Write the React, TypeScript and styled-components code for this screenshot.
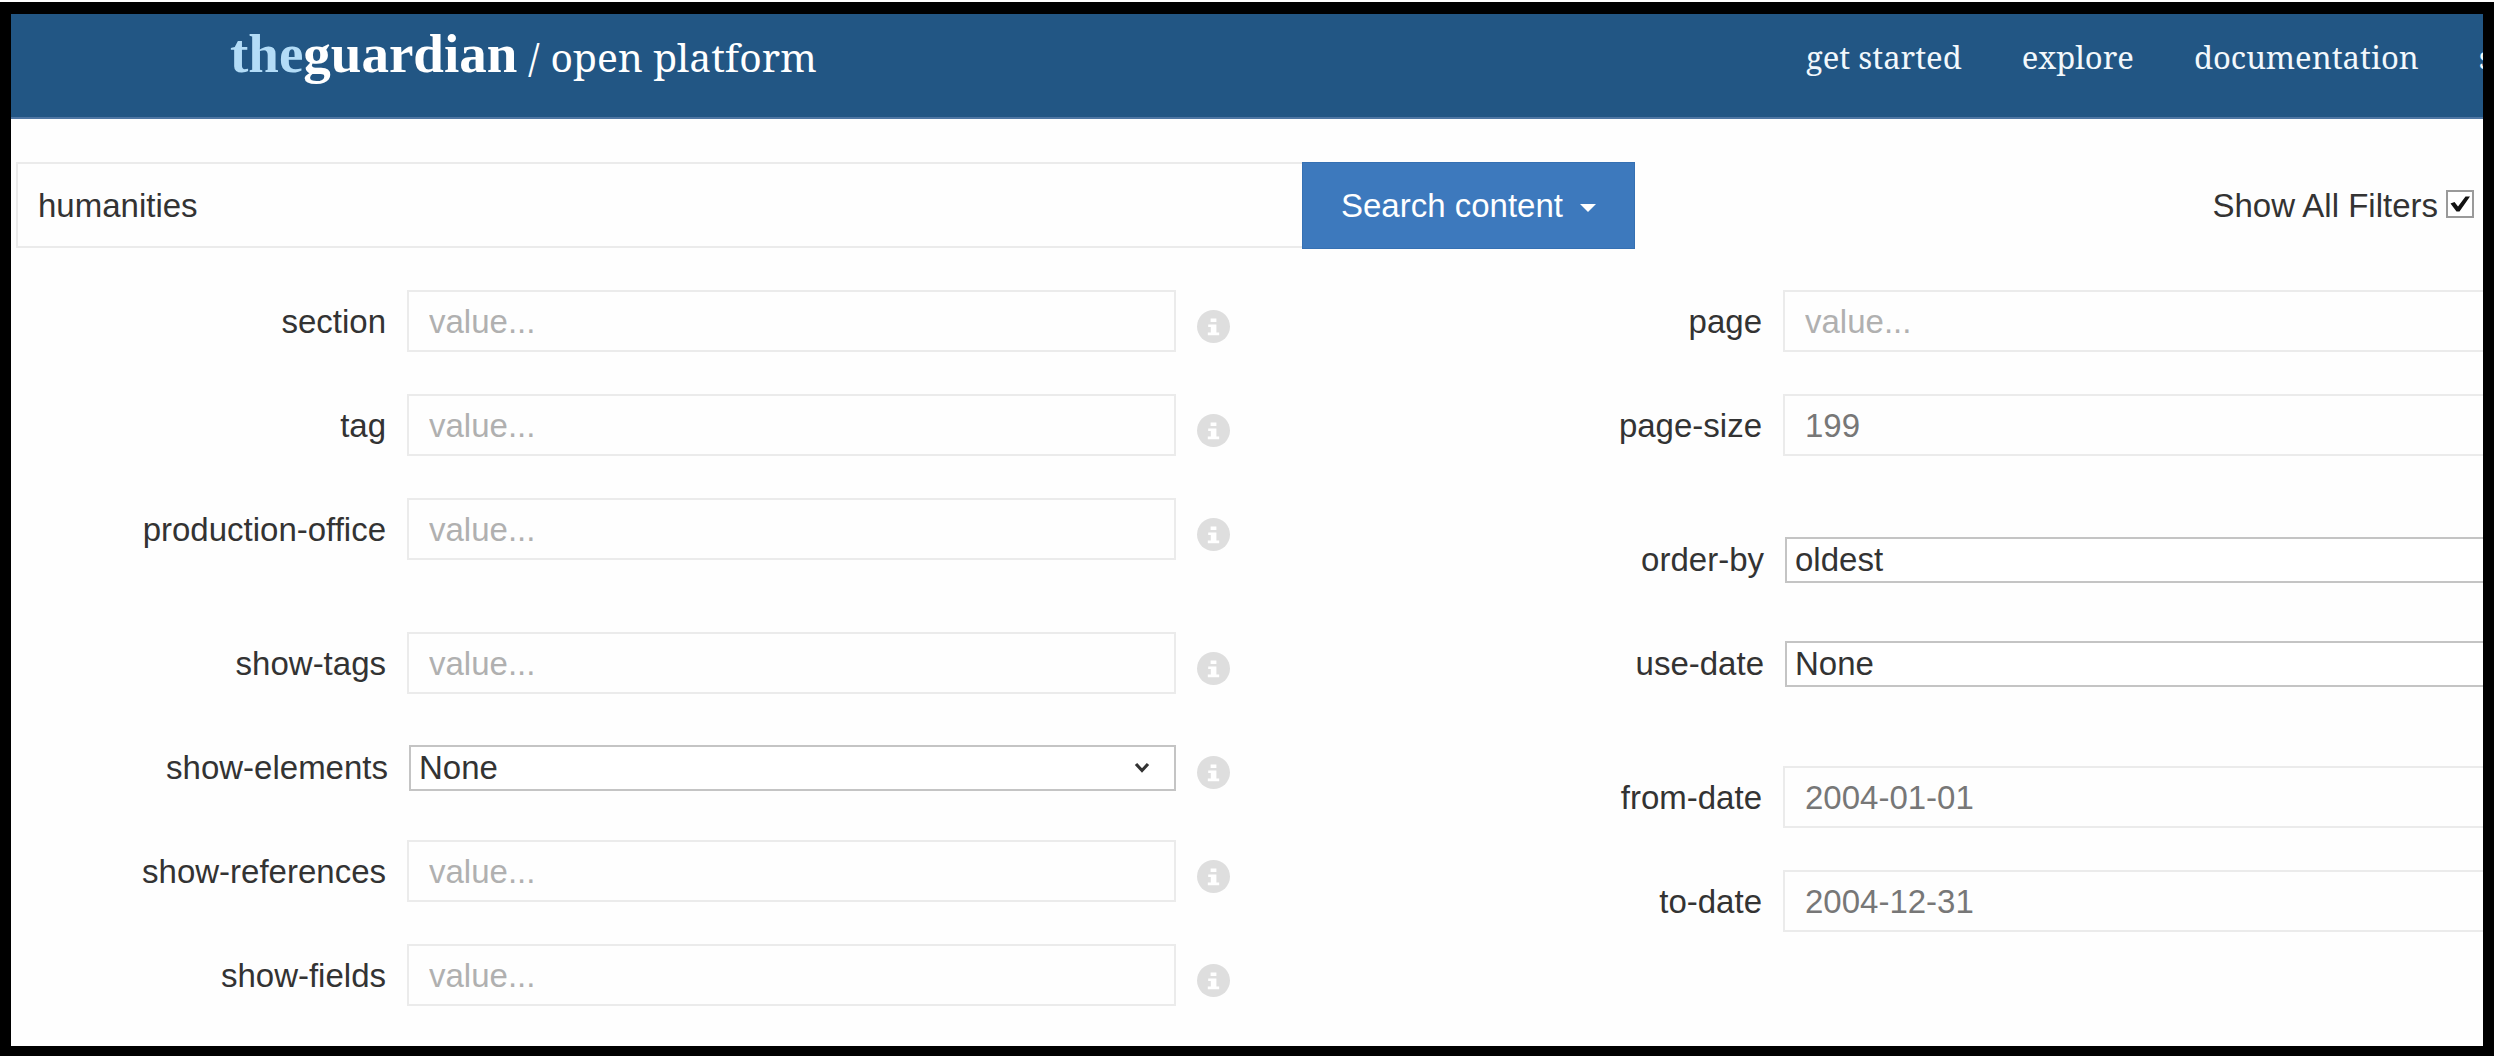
import React from "react";
import styled, { createGlobalStyle, css } from "styled-components";

const sans = '"Liberation Sans", Arial, sans-serif';
const serif = '"Noto Serif", "DejaVu Serif Condensed", "DejaVu Serif", serif';
const logoSerif = '"Liberation Serif", Georgia, serif';

const GlobalStyle = createGlobalStyle`
  *, *::before, *::after { box-sizing: border-box; }
  body {
    margin: 0;
    background: #fff;
    color: #333;
    font-family: ${sans};
    font-size: 33px;
    line-height: 40px;
  }
`;

const Frame = styled.div`
  margin-top: 2px;
  min-height: calc(100vh - 2px);
  border: solid #000;
  border-width: 12px 11px 10px;
  background: #fefefe;
  overflow: hidden;
`;

const Header = styled.header`
  display: flex;
  justify-content: space-between;
  align-items: flex-start;
  height: 105px;
  padding-left: 219px;
  background: #225684;
  border-bottom: 2px solid #4f76a3;
  color: #fff;
  font-family: ${serif};
  white-space: nowrap;
  overflow: hidden;
`;

const Brand = styled.a`
  display: flex;
  align-items: baseline;
  gap: 11px;
  color: inherit;
  text-decoration: none;
  font-size: 39px;
  line-height: 80px;
`;

const Logo = styled.strong`
  font-family: ${logoSerif};
  font-size: 55px;
`;

const LogoThe = styled.span`
  color: #b3dcf7;
`;

const Platform = styled.span`
  display: flex;
  gap: 11px;
`;

const Nav = styled.nav`
  display: flex;
  gap: 60px;
  flex: none;
  width: 677px;
  line-height: 86px;
`;

const NavLink = styled.a`
  color: #f2f8fc;
  font-size: 31px;
  text-decoration: none;
`;

const SearchBar = styled.form`
  display: grid;
  grid-template-columns: 643fr 586fr;
  align-items: start;
  margin-top: 43px;
  padding: 0 9px 0 5px;
`;

const fieldText = css`
  font-family: inherit;
  font-size: 33px;
  line-height: 40px;
`;

const boxed = css`
  ${fieldText}
  width: 100%;
  min-width: 0;
  margin: 0;
  padding: 2px 20px 0;
  border: 2px solid #ebebeb;
  border-radius: 0;
  background: #fefefe;
  outline: none;
`;

const SearchInput = styled.input`
  ${boxed}
  height: 86px;
  border-right: 0;
  color: #333;
`;

const SearchActions = styled.div`
  display: flex;
  justify-content: space-between;
  align-items: flex-start;
`;

const SearchButton = styled.button`
  ${fieldText}
  display: flex;
  align-items: center;
  gap: 17px;
  height: 87px;
  padding: 1px 38px 0;
  border: 1px solid #3570b3;
  background: #3d79bd;
  color: #fff;
  cursor: pointer;
`;

const Caret = styled.span`
  margin-top: 4px;
  border: 8px solid transparent;
  border-top-color: #fff;
  border-bottom: 0;
`;

const FilterToggle = styled.label`
  display: flex;
  align-items: flex-start;
  gap: 8px;
  padding-top: 24px;
`;

const TickHolder = styled.span`
  position: relative;
  display: flex;
  width: 28px;
  height: 28px;
  margin-top: 4px;
`;

const TickBox = styled.input`
  appearance: none;
  width: 28px;
  height: 28px;
  margin: 0;
  border: 2px solid #9a9a9a;
  background: #fff;

  &:not(:checked) + svg { display: none; }
`;

const TickMark = styled.svg`
  position: absolute;
  inset: 0;
  pointer-events: none;
`;

const Filters = styled.div`
  display: grid;
  grid-template-columns: 172fr 137fr;
  align-items: start;
  margin-top: 41px;
  padding-bottom: 40px;
`;

const Column = styled.div<{ $cut?: boolean }>`
  display: flex;
  flex-direction: column;
  gap: 72px;
  min-width: 0;
  padding-right: ${(p) => (p.$cut ? 0 : 157)}px;
`;

const Group = styled.div`
  display: flex;
  flex-direction: column;
  gap: 42px;
`;

const Row = styled.div<{ $select?: boolean; $info?: boolean }>`
  display: grid;
  grid-template-columns: ${(p) => (p.$select ? 377 : 375)}px minmax(0, 1fr) ${(p) => (p.$info ? "33px" : "")};
  column-gap: 21px;
  align-items: center;
  height: 62px;
`;

const RowLabel = styled.label`
  padding-top: 2px;
  text-align: right;
  white-space: nowrap;
`;

const TextField = styled.input<{ $cut?: boolean }>`
  ${boxed}
  height: 62px;
  color: #777;
  ${(p) => p.$cut && "border-right: 0;"}

  &::placeholder {
    color: #b0b0b0;
    opacity: 1;
  }
`;

const SelectHolder = styled.span`
  position: relative;
  display: flex;
  padding-top: 2px;
`;

const SelectField = styled.select<{ $cut?: boolean }>`
  ${fieldText}
  appearance: none;
  width: 100%;
  height: 46px;
  margin: 0;
  padding: 0 8px;
  border: 2px solid #c4c4c4;
  border-radius: 0;
  background: #fff;
  color: #333;
  ${(p) => p.$cut && "border-right: 0;"}
`;

const Chevron = styled.svg`
  position: absolute;
  right: 26px;
  top: 18px;
  pointer-events: none;
`;

const InfoButton = styled.button`
  display: flex;
  margin-top: 11px;
  padding: 0;
  border: 0;
  background: none;
  cursor: pointer;
`;

function InfoIcon() {
  return (
    <svg width="33" height="33" viewBox="0 0 33 33" aria-hidden="true">
      <circle cx="16.5" cy="16.5" r="16.5" fill="#dedede" />
      <path d="M13.6 8.6h5.8v3.4h-5.8zM11.2 14.4h8.2v8.2h2.800v2.600H10.800v-2.600h3v-5.600h-2.600z" fill="#fff" />
    </svg>
  );
}

type Field = { name: string; value?: string; options?: string[] };

const leftGroups: Field[][] = [
  [{ name: "section" }, { name: "tag" }, { name: "production-office" }],
  [
    { name: "show-tags" },
    { name: "show-elements", options: ["None"] },
    { name: "show-references" },
    { name: "show-fields" },
  ],
];

const rightGroups: Field[][] = [
  [{ name: "page" }, { name: "page-size", value: "199" }],
  [
    { name: "order-by", options: ["oldest"] },
    { name: "use-date", options: ["None"] },
  ],
  [
    { name: "from-date", value: "2004-01-01" },
    { name: "to-date", value: "2004-12-31" },
  ],
];

function FilterRow({ field, cut }: { field: Field; cut?: boolean }) {
  return (
    <Row $select={!!field.options} $info={!cut}>
      <RowLabel htmlFor={field.name}>{field.name}</RowLabel>
      {field.options ? (
        <SelectHolder>
          <SelectField id={field.name} $cut={cut}>
            {field.options.map((o) => (
              <option key={o}>{o}</option>
            ))}
          </SelectField>
          {!cut && (
            <Chevron width="16" height="14" viewBox="0 0 16 14" aria-hidden="true">
              <path d="M2 3l6 6.5L14 3" fill="none" stroke="#333" strokeWidth="3.2" />
            </Chevron>
          )}
        </SelectHolder>
      ) : (
        <TextField id={field.name} placeholder="value..." defaultValue={field.value} $cut={cut} />
      )}
      {!cut && (
        <InfoButton type="button" aria-label={`About ${field.name}`}>
          <InfoIcon />
        </InfoButton>
      )}
    </Row>
  );
}

function FilterColumn({ groups, cut }: { groups: Field[][]; cut?: boolean }) {
  return (
    <Column $cut={cut}>
      {groups.map((group) => (
        <Group key={group[0].name}>
          {group.map((field) => (
            <FilterRow key={field.name} field={field} cut={cut} />
          ))}
        </Group>
      ))}
    </Column>
  );
}

export default function App() {
  return (
    <>
      <GlobalStyle />
      <Frame>
        <Header>
          <Brand href="#">
            <Logo>
              <LogoThe>the</LogoThe>guardian
            </Logo>
            <Platform>
              <span>/</span>
              <span>open platform</span>
            </Platform>
          </Brand>
          <Nav>
            <NavLink href="#get-started">get started</NavLink>
            <NavLink href="#explore">explore</NavLink>
            <NavLink href="#documentation">documentation</NavLink>
            <NavLink href="#s">s</NavLink>
          </Nav>
        </Header>
        <main>
          <SearchBar onSubmit={(e) => e.preventDefault()}>
            <SearchInput aria-label="Search" defaultValue="humanities" />
            <SearchActions>
              <SearchButton type="button">
                Search content
                <Caret />
              </SearchButton>
              <FilterToggle>
                Show All Filters
                <TickHolder>
                  <TickBox type="checkbox" defaultChecked />
                  <TickMark width="28" height="28" viewBox="0 0 28 28" aria-hidden="true">
                    <path d="M4.5 13.5l4-1.5 3.5 4.5L19.5 6.5H24L13.5 21.5h-3z" fill="#111" />
                  </TickMark>
                </TickHolder>
              </FilterToggle>
            </SearchActions>
          </SearchBar>
          <Filters>
            <FilterColumn groups={leftGroups} />
            <FilterColumn groups={rightGroups} cut />
          </Filters>
        </main>
      </Frame>
    </>
  );
}
